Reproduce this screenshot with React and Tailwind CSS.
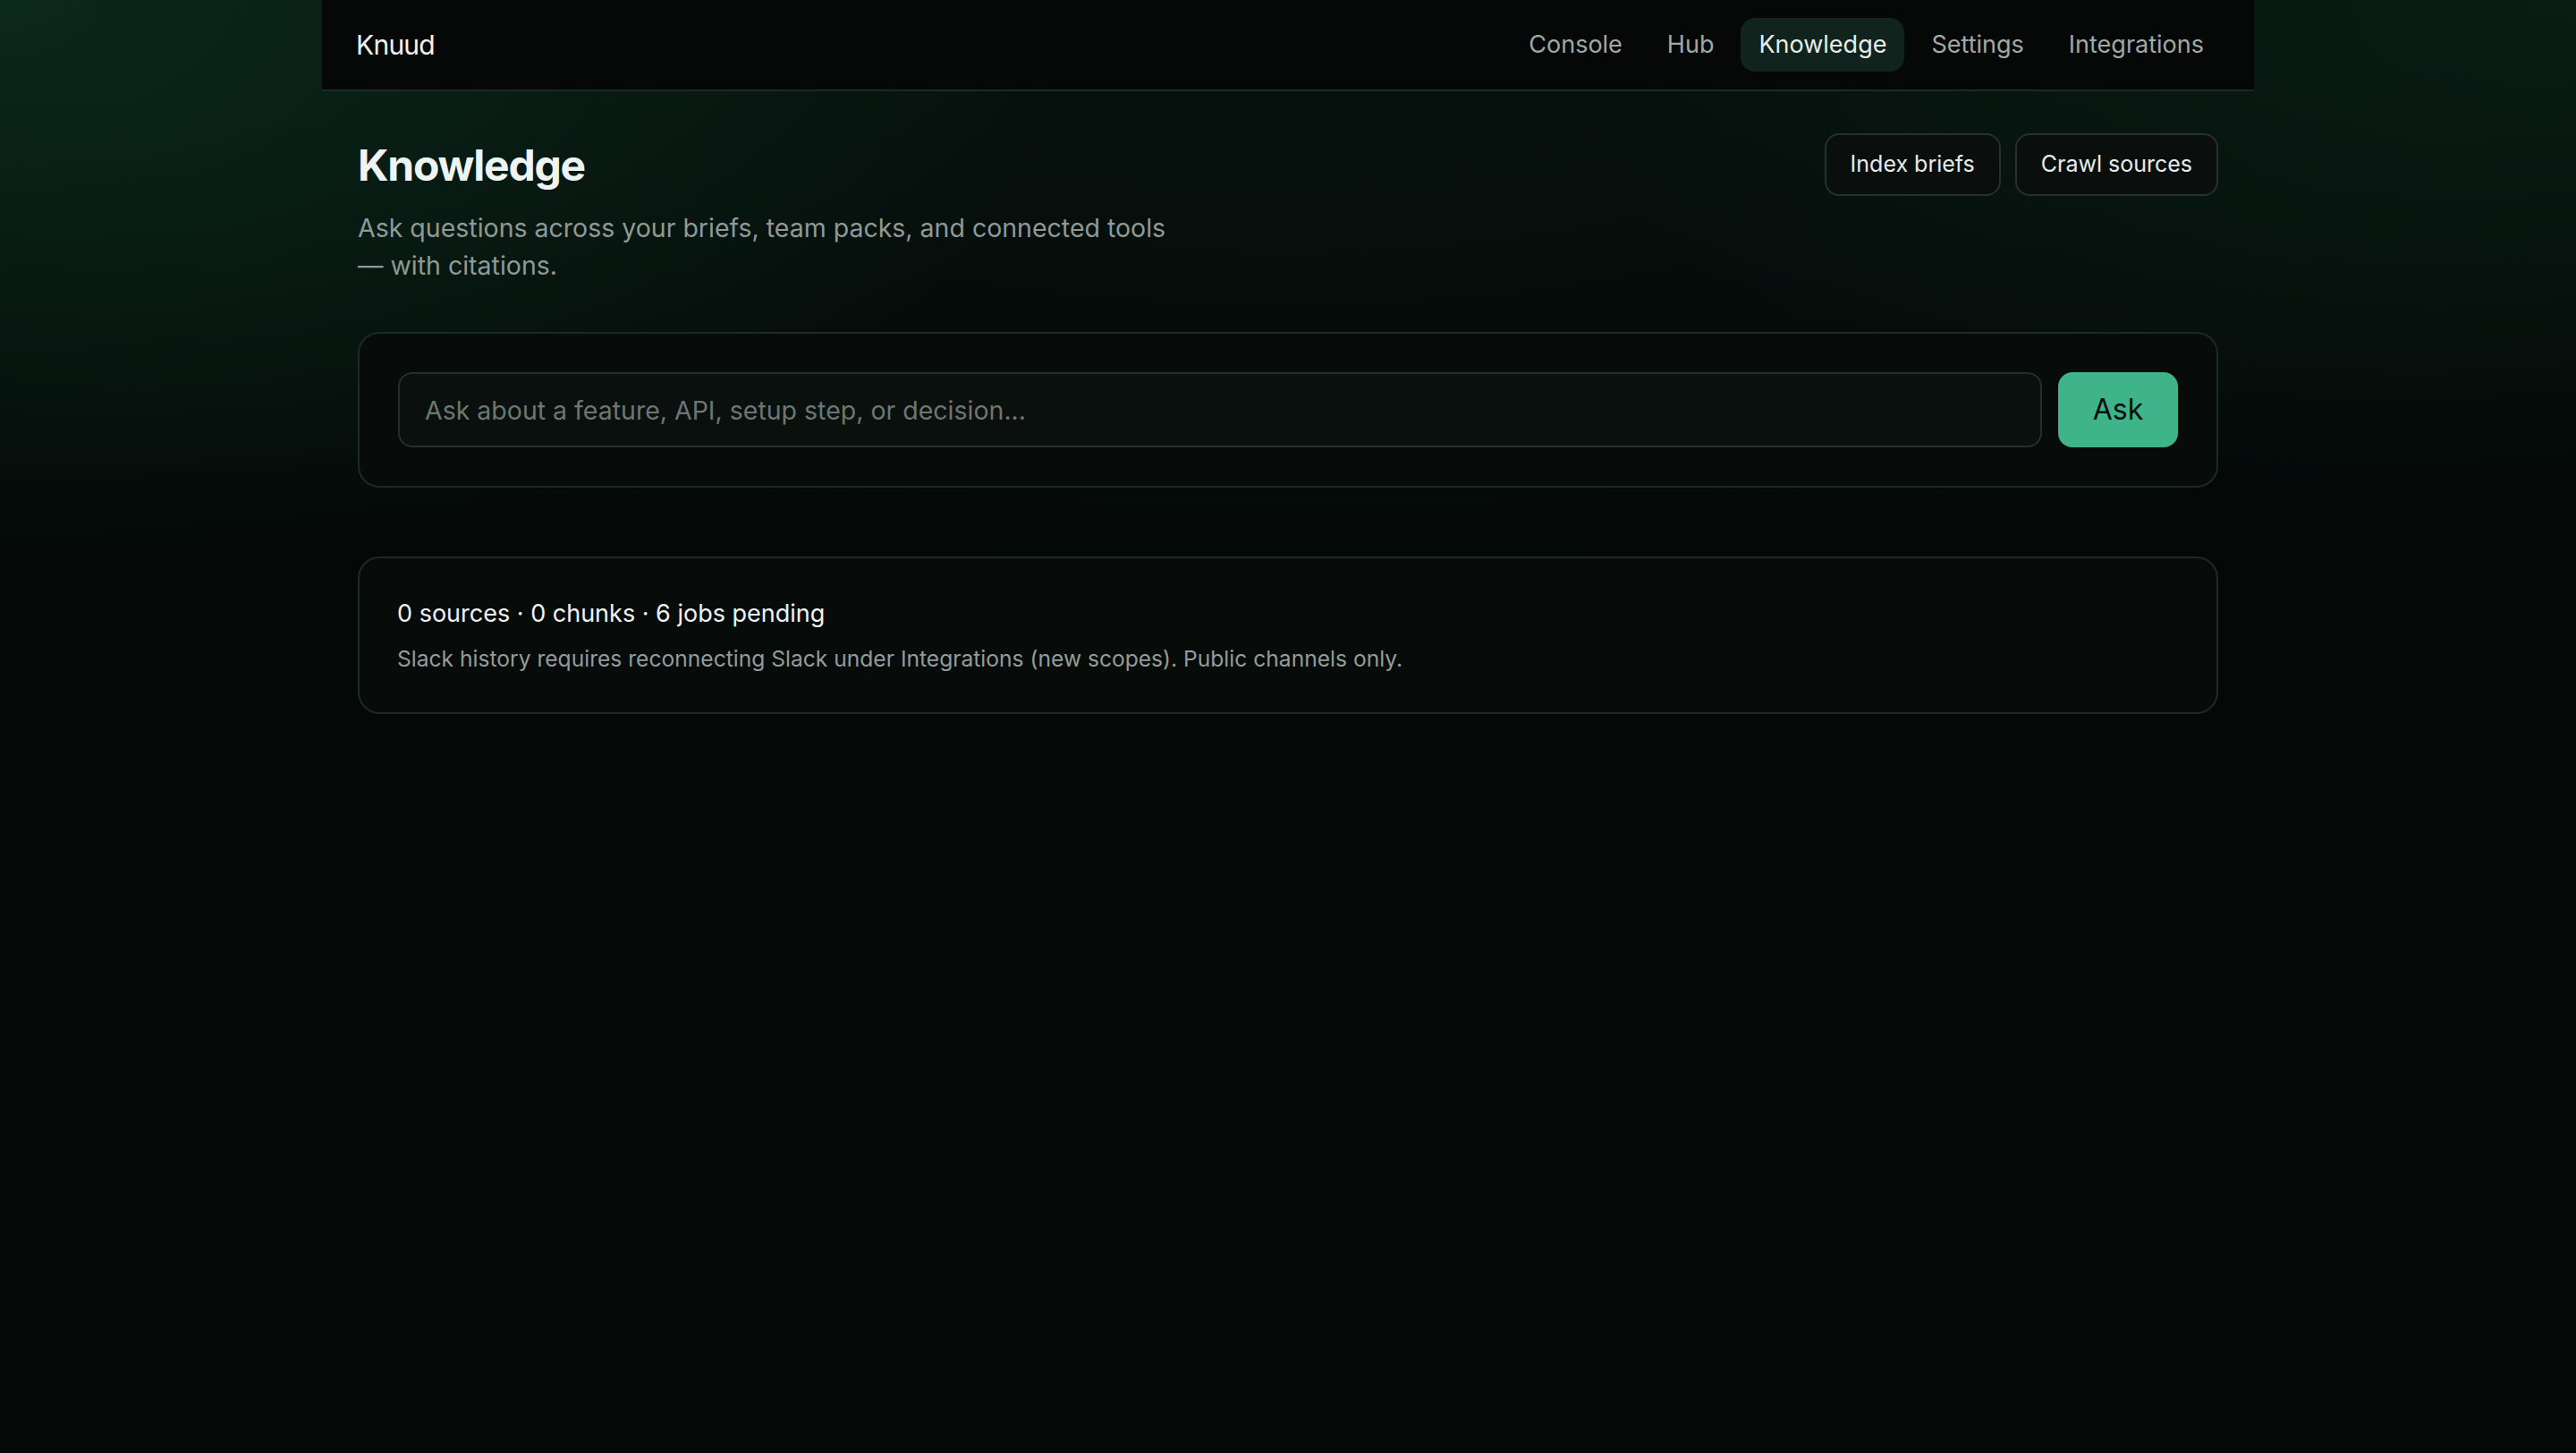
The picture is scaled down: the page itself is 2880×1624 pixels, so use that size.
export default function App() {
  const links = ["Console", "Hub", "Knowledge", "Settings", "Integrations"];
  return (
    <div className="min-h-screen w-full bg-[#040807] bg-[radial-gradient(ellipse_42%_40%_at_0%_0%,rgba(18,78,50,0.45),transparent),radial-gradient(ellipse_40%_36%_at_100%_0%,rgba(18,70,46,0.3),transparent),radial-gradient(ellipse_70%_45%_at_50%_0%,rgba(14,50,36,0.25),transparent)] font-['Inter',sans-serif] antialiased">
      <div className="mx-auto w-[2160px]">
        <nav className="flex h-[102px] items-center justify-between border-b-2 border-[#1a2a24] bg-[#060807] pl-[38px] pr-9">
          <div className="text-[30px] tracking-tight text-[#eef3f1]">Knuud</div>
          <div className="flex items-center gap-[10px]">
            {links.map((l) =>
              l === "Knowledge" ? (
                <span key={l} className="rounded-2xl bg-[#10231d] px-5 py-[10px] text-[27px] leading-[40px] text-[#e6eeeb]">
                  {l}
                </span>
              ) : (
                <span key={l} className="px-5 py-[10px] text-[27px] leading-[40px] text-[#a0a9a5]">
                  {l}
                </span>
              )
            )}
          </div>
        </nav>
        <main className="px-10 pt-[47px]">
          <div className="flex items-start justify-between">
            <div>
              <h1 className="text-[48px] font-bold leading-[72px] tracking-tight text-[#eef4f1]">Knowledge</h1>
              <p className="mt-[13px] max-w-[930px] text-[28.5px] leading-[42px] text-[#8f9995]">
                Ask questions across your briefs, team packs, and connected tools — with citations.
              </p>
            </div>
            <div className="flex gap-4">
              <button className="h-[70px] rounded-2xl border-2 border-[#25312d] bg-[#0a0f0d] px-[27px] text-[25px] text-[#e5ebe8]">
                Index briefs
              </button>
              <button className="h-[70px] rounded-2xl border-2 border-[#25312d] bg-[#0a0f0d] px-[27px] text-[25px] text-[#e5ebe8]">
                Crawl sources
              </button>
            </div>
          </div>

          <div className="mt-[53px] flex gap-[18px] rounded-3xl border-2 border-[#1c2a25] bg-[#070c0a] p-[43px]">
            <input
              className="h-[84px] flex-1 rounded-2xl border-2 border-[#21302a] bg-[#0a100d] px-7 text-[28.5px] text-[#e5ebe8] outline-none placeholder:text-[#6b7772]"
              placeholder="Ask about a feature, API, setup step, or decision..."
            />
            <button className="h-[84px] w-[134px] rounded-2xl bg-[#3fb389] text-[32px] text-[#06100b]">Ask</button>
          </div>

          <div className="mt-[77px] rounded-3xl border-2 border-[#1c2a25] bg-[#070c0a] p-[42px]">
            <div className="text-[27px] leading-[40px] text-[#eef3f1]">0 sources · 0 chunks · 6 jobs pending</div>
            <div className="mt-3 text-[24.6px] leading-[36px] text-[#939c98]">
              Slack history requires reconnecting Slack under Integrations (new scopes). Public channels only.
            </div>
          </div>
        </main>
      </div>
    </div>
  );
}
